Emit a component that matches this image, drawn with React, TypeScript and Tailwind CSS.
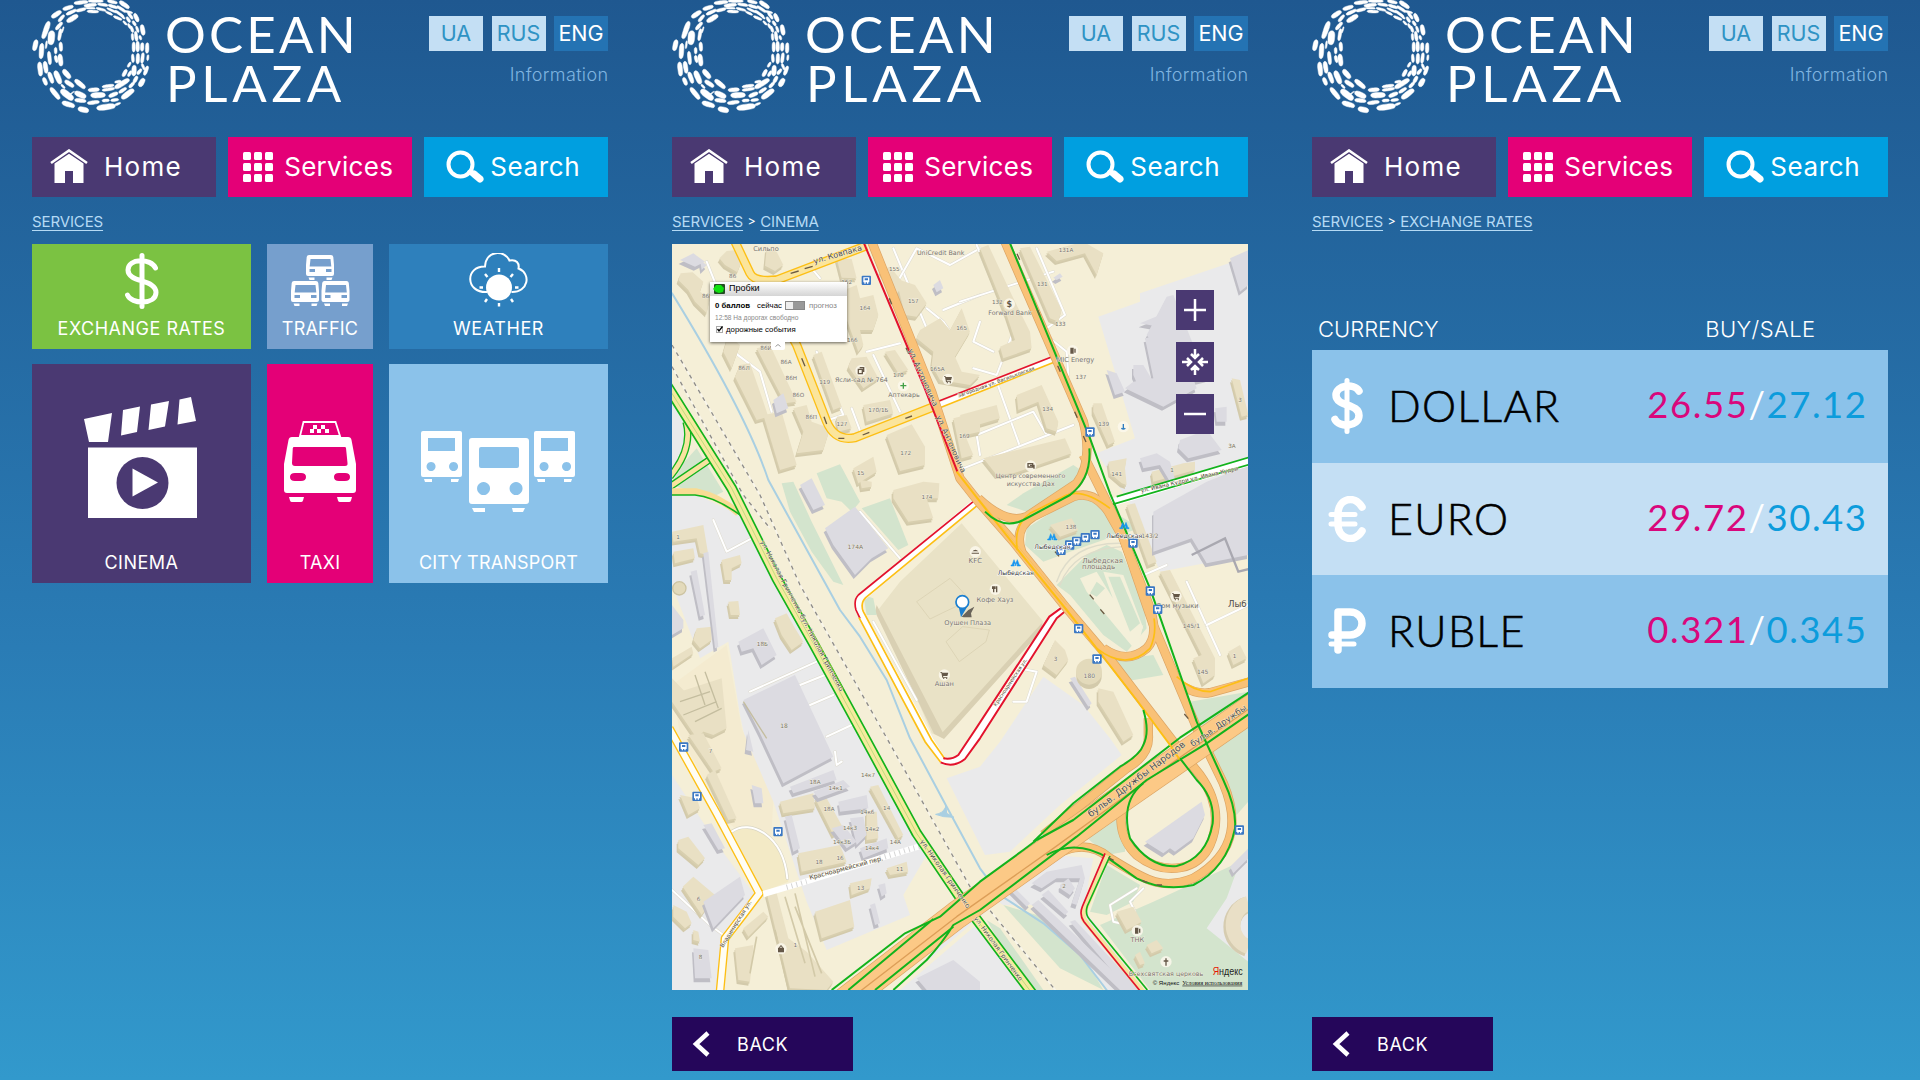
import React from "react";

/* ---------- Logo ---------- */

// Each fish of the ring: x1, y1, x2, y2, thickness
const fish: number[][] = [
  [166, 9, 200, 6, 10], [208, 3, 246, 3, 8], [266, 3, 288, 8, 9], [302, 6, 324, 22, 12], [196, 17, 226, 14, 10],
  [236, 12, 260, 16, 8], [268, 16, 290, 23, 8], [294, 20, 314, 34, 8], [98, 50, 120, 36, 13], [132, 27, 156, 20, 11],
  [142, 42, 166, 31, 9], [172, 32, 194, 27, 9], [205, 34, 232, 35, 8], [200, 24, 222, 25, 5], [232, 25, 254, 31, 7], [260, 36, 274, 43, 6],
  [264, 26, 286, 36, 6], [288, 34, 308, 48, 7], [284, 50, 302, 58, 7], [118, 62, 130, 48, 9], [144, 63, 170, 48, 14],
  [86, 68, 70, 112, 14], [110, 86, 124, 70, 10], [96, 96, 92, 130, 19], [122, 90, 117, 118, 9], [49, 123, 43, 148, 13],
  [66, 134, 63, 172, 13], [87, 158, 90, 190, 10], [107, 146, 107, 158, 8], [122, 130, 123, 150, 10], [107, 170, 110, 184, 9],
  [120, 166, 123, 194, 13], [59, 190, 62, 224, 13], [75, 188, 79, 216, 12], [72, 236, 78, 252, 11], [88, 220, 97, 246, 12],
  [107, 216, 120, 248, 15], [132, 212, 148, 232, 14], [138, 244, 158, 258, 12], [168, 242, 192, 262, 13],
  [94, 266, 116, 294, 13], [126, 272, 156, 296, 18], [126, 256, 132, 262, 6], [168, 278, 194, 290, 15], [208, 270, 234, 269, 11],
  [250, 260, 278, 256, 8], [250, 270, 280, 266, 8], [216, 286, 252, 285, 15], [130, 308, 160, 318, 14], [168, 300, 194, 303, 11],
  [206, 309, 234, 306, 10], [178, 326, 202, 332, 15], [234, 324, 282, 318, 16], [250, 302, 264, 301, 8], [276, 301, 292, 299, 8],
  [270, 288, 290, 280, 11], [288, 314, 298, 310, 6], [308, 293, 338, 271, 15], [300, 276, 316, 266, 9], [288, 262, 324, 240, 14],
  [300, 244, 288, 246, 7], [330, 260, 340, 250, 9], [360, 256, 370, 239, 14], [343, 245, 350, 232, 10], [310, 226, 318, 212, 10],
  [326, 226, 332, 216, 8], [341, 224, 343, 200, 13], [325, 198, 330, 190, 7], [354, 220, 362, 210, 9], [374, 222, 382, 202, 10],
  [367, 194, 372, 206, 7], [339, 184, 338, 166, 8], [353, 188, 354, 164, 10], [366, 186, 369, 162, 9], [383, 178, 384, 168, 6],
  [381, 156, 382, 132, 10], [341, 152, 341, 130, 9], [353, 152, 353, 128, 10], [366, 150, 367, 132, 10], [338, 118, 337, 104, 7],
  [350, 120, 347, 98, 9], [362, 116, 360, 110, 7], [370, 102, 366, 78, 12], [354, 94, 350, 82, 7], [338, 94, 334, 82, 8],
  [330, 82, 326, 74, 7], [345, 74, 340, 66, 8], [353, 62, 345, 44, 11], [328, 64, 322, 54, 8], [336, 54, 326, 40, 8],
  [318, 72, 312, 66, 6], [312, 54, 302, 44, 6], [126, 96, 130, 84, 4], [80, 126, 78, 142, 5], [148, 285, 160, 276, 3], [318, 34, 334, 38, 6],
];

// Rounded spindle along a fish's axis, a little thinner at the tail
function fishPath([x1, y1, x2, y2, w]: number[]) {
  const len = Math.hypot(x2 - x1, y2 - y1) || 1;
  const ux = (x2 - x1) / len;
  const uy = (y2 - y1) / len;
  const h = w * 0.52;
  const p = (t: number, s: number) => `${(x1 + ux * t - uy * s).toFixed(1)} ${(y1 + uy * t + ux * s).toFixed(1)}`;
  return `M${p(-4, 0)}C${p(-3, h)} ${p(len * 0.2, h * 1.1)} ${p(len * 0.55, h)}S${p(len + 4, h * 0.9)} ${p(len + 4, 0)}C${p(len + 4, -h * 0.9)} ${p(len * 0.85, -h)} ${p(len * 0.55, -h)}S${p(-3, -h)} ${p(-4, 0)}Z`;
}

function Logo() {
  return (
    <div className="flex h-[113px] w-[340px] shrink-0">
      <svg className="-ml-3 h-[120px] w-[140px] shrink-0" viewBox="0 0 420 360" fill="#fff" stroke="#fff" strokeWidth="1.5" strokeLinejoin="round">
        {fish.map((f, i) => (
          <path key={i} d={fishPath(f)} />
        ))}
      </svg>
      <div className="ml-[5px] pt-[10px] font-['Lato'] text-[51px] leading-[48.5px] text-white">
        <div className="tracking-[3.2px]">OCEAN</div>
        <div className="ml-[1px] tracking-[4.7px]">PLAZA</div>
      </div>
    </div>
  );
}

/* ---------- Header ---------- */

function Header() {
  return (
    <>
      <div className="flex h-[137px] justify-between">
        <Logo />
        <div className="pt-4">
          <div className="flex gap-[8.5px] text-[21.5px] font-[380]">
            <span className="flex h-[34.5px] w-[54px] items-center justify-center bg-[#c4dff4] text-[#2f93c4]">UA</span>
            <span className="flex h-[34.5px] w-[54px] items-center justify-center bg-[#c4dff4] text-[#2f93c4]">RUS</span>
            <span className="flex h-[34.5px] w-[54px] items-center justify-center bg-[#2473b3] text-white">ENG</span>
          </div>
          <div className="mt-[11.5px] -mr-[0.4px] text-right text-[18px] leading-[26px] font-light tracking-[0.35px] text-[#7fb4e0]">Information</div>
        </div>
      </div>
      <nav className="grid h-[59.5px] grid-cols-3 gap-[12.5px] text-[26px] font-[380] text-white">
        <a className="flex items-center bg-[#4a3972] pl-[18px]">
          <svg className="h-[35px] w-[38px]" viewBox="0 0 38 35" fill="#fff">
            <path d="M1 14 19 1.500 37 14" fill="none" stroke="#fff" strokeWidth="2.600" />
            <path d="M4.500 14.500 19 4.800l14.500 9.700V34H23V22h-8v12H4.500Z" />
          </svg>
          <span className="ml-[16px] tracking-[1.3px]">Home</span>
        </a>
        <a className="flex items-center bg-[#e40077] pl-[15px]">
          <svg className="h-[30px] w-[30px]" viewBox="0 0 30 30" fill="#fff">
            {[0, 11, 22].map((y) => [0, 11, 22].map((x) => <rect key={`${x}-${y}`} x={x} y={y} width="8" height="8" rx="1.500" />))}
          </svg>
          <span className="ml-[11px] tracking-[0.3px]">Services</span>
        </a>
        <a className="flex items-center bg-[#009fe0] pl-[22px]">
          <svg className="h-[33px] w-[38px]" viewBox="0 0 38 33" fill="none" stroke="#fff" strokeLinecap="round">
            <circle cx="14.500" cy="14.500" r="12" strokeWidth="4" />
            <path d="m23 22 3 2" strokeWidth="4" />
            <path d="m28 24 6 5" strokeWidth="7" />
          </svg>
          <span className="ml-[6px] tracking-[0.6px]">Search</span>
        </a>
      </nav>
    </>
  );
}

function Crumbs({ path }: { path: string[] }) {
  return (
    <div className="flex h-[47.5px] items-center gap-[4.5px] pt-[3px] text-[15px] tracking-[-0.12px] text-[#b5daf5]">
      {path.map((p, i) => (
        <React.Fragment key={p}>
          {i > 0 && <span className="text-[12.5px] text-white">&gt;</span>}
          <span className="underline underline-offset-[3px]">{p}</span>
        </React.Fragment>
      ))}
    </div>
  );
}

function Back() {
  return (
    <button className="flex h-[54px] w-[181px] items-center bg-[#25065a] pl-5 text-[18px] tracking-[0.6px] text-white">
      <svg className="h-[26px] w-[18px]" viewBox="0 0 18 26" fill="none" stroke="#fff" strokeWidth="4.500">
        <path d="M16 2 4 13l12 11" />
      </svg>
      <span className="ml-[27px]">BACK</span>
    </button>
  );
}

/* ---------- Tile icons ---------- */

function MiniBus({ x, y }: { x: number; y: number }) {
  return (
    <g transform={`translate(${x} ${y})`}>
      <path fillRule="evenodd" d="M2.500 0h22q2 0 2.300 2l.7 8v9q0 2-2 2h-24q-2 0-2-2v-9l.7-8q.3-2 2.300-2ZM4 4l-.8 7.500h21.600L24 4ZM3 14v3h5.500v-3Zm16.500 0v3H25v-3Z" />
      <path d="M2 22.500h6V25H3Zm18 0h6L25 25h-5Z" />
    </g>
  );
}

function TrafficIcon() {
  return (
    <svg className="h-[52px] w-[59px]" viewBox="0 0 59 52" fill="#fff">
      <MiniBus x={15.5} y={0} />
      <MiniBus x={0.5} y={26} />
      <MiniBus x={31} y={26} />
    </svg>
  );
}

function WeatherIcon() {
  return (
    <svg className="h-[54px] w-[60px]" viewBox="0 0 60 54" fill="none" stroke="#fff">
      <path d="M18 39C-4 40-4 13 16 13.500 17-3.500 36-3 40.500 7.500c7-1.500 10 3 9 8 13 5 10 24-7 23.500" strokeWidth="2" />
      <circle cx="30" cy="34.500" r="13" fill="#fff" stroke="none" />
      <path d="M30 15v4M16 21l2.500 3M44 21l-2.500 3M10.500 34.500h3.500M46 34.500h3.500M16 49l2-3M44 49l-2-3M30 50v3.500" strokeWidth="2.400" />
    </svg>
  );
}

function CinemaIcon() {
  return (
    <svg className="mr-[2px] h-[122px] w-[114px]" viewBox="0 0 114 122" fill="#fff">
      <path d="m0 22 28-6-4 29H5ZM39 13l17-3.500-3 25.500-16 3.500ZM67 7.500 85 4l-4 25.500-16.500 3.500ZM95.500 2.500 107 0l5 24-18.500 3.500Z" />
      <path d="M4 50.500h109V121H4Z" />
      <circle cx="58.500" cy="86" r="26" fill="#4a3972" />
      <path d="M48.500 71.500v28L74 85.500Z" />
    </svg>
  );
}

function TaxiIcon() {
  return (
    <svg className="h-[82px] w-[74px]" viewBox="0 0 74 82" fill="#fff">
      <path d="M20.500 1h32l4.500 14H17Z" fill="none" stroke="#fff" strokeWidth="1.800" />
      <path d="M30 4h4v4h-4Zm8 0h4v4h-4Zm-11 4h4v4h-4Zm7 0h4v4h-4Zm8 0h4v4h-4Z" />
      <path fillRule="evenodd" d="M9 16h56q3 0 3.500 3L73 43v26q0 3-3 3H4q-3 0-3-3V43l4.500-24q.5-3 3.500-3Zm2 10q-1 0-1.200 1L9 42q0 3 3 3h50q3 0 2.500-3L63 27q-.2-1-1.200-1ZM12 52q-5 0-5 4t5 4h6q5 0 5-4t-5-4Zm44 0q-5 0-5 4t5 4h6q5 0 5-4t-5-4Z" />
      <path d="M6 76h15l-1 3.500q-.5 1.500-2 1.500H9q-1.500 0-2-1.500Zm48 0h15l-1 3.500q-.5 1.500-2 1.500h-9q-1.500 0-2-1.500Z" />
    </svg>
  );
}

function TransportIcon() {
  const side = (x: number) => (
    <g transform={`translate(${x} 0)`}>
      <path fillRule="evenodd" d="M2 0h37q2 0 2 2v42q0 2-2 2H2q-2 0-2-2V2Q0 0 2 0Zm5 7v13h27V7ZM10 31a4.500 4.500 0 1 0 .1 0Zm22.500 0a4.500 4.500 0 1 0 .1 0Z" />
      <path d="M3 48h8v3H4ZM30 48h8l-1 3h-7Z" />
    </g>
  );
  return (
    <svg className="mr-[2px] h-[81px] w-[154px]" viewBox="0 0 154 81" fill="#fff">
      {side(0)}
      {side(113)}
      <path fillRule="evenodd" d="M51 7h54q3 0 3 3v60q0 3-3 3H51q-3 0-3-3V10q0-3 3-3Zm9 9q-2 0-2 2v17q0 2 2 2h36q2 0 2-2V18q0-2-2-2Zm2.500 35a6.500 6.500 0 1 0 .1 0ZM95 51a6.500 6.500 0 1 0 .1 0Z" />
      <path d="M51 77h13v4H53ZM91 77h13l-2 4H92Z" />
    </svg>
  );
}

function DollarIcon() {
  return (
    <svg className="h-[56px] w-[36px]" viewBox="0 0 36 56" fill="none" stroke="#fff" strokeLinecap="round">
      <path d="M18 2.500v51M31.500 15C27 5 4 5 4 17c0 13 28 9 28 22.500C32 52 7 51.500 3.500 42" strokeWidth="5" />
    </svg>
  );
}

/* ---------- Services screen ---------- */

function ServicesScreen() {
  return (
    <>
      <Crumbs path={["SERVICES"]} />
      <div className="grid grid-cols-[219px_105.500px_219px] grid-rows-[105px_219px] justify-between gap-y-[15px] text-[18px] leading-[22px] tracking-[0.2px] text-white">
        <div className="flex flex-col items-center justify-between bg-[#7bc242] pt-[9px] pb-[9px]">
          <DollarIcon />
          <span className="tracking-[0.5px]">EXCHANGE RATES</span>
        </div>
        <div className="flex flex-col items-center justify-between bg-[#769fcd] pt-[11px] pb-[9px]">
          <TrafficIcon />
          <span>TRAFFIC</span>
        </div>
        <div className="flex flex-col items-center justify-between bg-[#2e80bc] pt-[9px] pb-[9px]">
          <WeatherIcon />
          <span className="tracking-[0.6px]">WEATHER</span>
        </div>
        <div className="flex flex-col items-center justify-between bg-[#4a3972] pt-[33px] pb-[9.5px]">
          <CinemaIcon />
          <span className="tracking-[0.5px]">CINEMA</span>
        </div>
        <div className="flex flex-col items-center justify-between bg-[#e40077] pt-[57px] pb-[9.5px]">
          <TaxiIcon />
          <span>TAXI</span>
        </div>
        <div className="flex flex-col items-center justify-between bg-[#8bc2ea] pt-[67px] pb-[9.5px]">
          <TransportIcon />
          <span>CITY TRANSPORT</span>
        </div>
      </div>
    </>
  );
}

/* ---------- Map ---------- */

const beige: string[] = [
  "62,115 98,112 130,140 120,170 150,190 140,235 105,200 85,165 55,135", "200,48 225,46 245,78 232,112 195,90 178,70",
  "320,40 350,50 370,90 345,108 315,92", "205,300 240,330 215,400 190,350", "240,390 270,385 310,500 325,545 290,555 225,425",
  "290,340 330,330 410,500 375,505", "460,360 485,350 545,515 520,525", "530,70 575,72 590,130 545,128",
  "540,170 590,150 600,190 640,180 655,240 640,285 600,285 610,330 595,350 545,210", "660,105 690,95 735,150 705,180",
  "720,135 765,150 800,205 770,245 735,240 715,160", "780,285 840,250 870,285 905,220 930,290 885,365 905,410 960,420 930,450 840,435 815,390 820,350 770,310",
  "575,370 620,365 655,430 610,460 565,395", "675,350 705,345 745,405 715,415", "610,510 690,495 700,535 620,560",
  "530,545 560,540 575,580 535,590", "310,540 365,530 410,690 360,705", "400,520 440,510 455,560 510,580 490,645 410,655 430,590",
  "680,600 755,568 795,635 795,690 720,708", "580,700 640,665 650,710 595,745", "880,550 960,530 960,590 915,600 940,660 905,670",
  "960,40 985,30 1060,190 1110,290 1115,340 1030,370 1020,335 1065,315 1040,240", "1160,50 1270,20 1330,55 1310,120 1275,55 1190,78",
  "1080,40 1110,35 1205,225 1195,260 1170,250", "1070,480 1145,450 1195,560 1190,590 1160,580 1135,500 1075,525",
  "970,670 1215,610 1235,655 1060,715 1010,720", "900,540 1010,510 1020,550 920,580", "1300,505 1325,505 1365,620 1345,630 1300,530",
  "1345,680 1400,670 1395,700 1400,750 1385,745 1350,715", "1475,710 1570,685 1605,680 1605,705 1480,740", "1715,430 1740,435 1765,540 1745,545",
  "36,890 130,870 145,960 120,955 110,910 40,920", "40,950 100,940 105,970 45,985", "185,975 240,960 245,985 215,1000 215,1035 195,1035",
  "205,1100 235,1098 240,1140 212,1140", "345,1150 380,1135 405,1180 430,1220 395,1245 365,1200", "110,1180 155,1175 155,1215 120,1240 100,1215",
  "36,1270 95,1235 100,1255 40,1295", "60,1370 185,1330 200,1480 160,1500 100,1480", "36,1330 75,1370 80,1420 130,1490 110,1510 36,1400",
  "700,765 790,740 838,745 835,790 800,790 820,850 745,860 700,790", "600,735 635,740 635,755 605,760",
  "1170,870 1235,850 1255,885 1200,905", "1400,810 1425,805 1490,980 1465,990", "1500,1010 1530,1005 1665,1270 1665,1320 1630,1345 1600,1270 1625,1260",
  "1185,1215 1215,1245 1225,1275 1190,1320 1150,1290", "1315,1360 1360,1370 1420,1500 1390,1520 1315,1400", "1705,1250 1740,1230 1760,1270 1720,1290",
  "360,1700 460,1675 465,1720 370,1735", "465,1690 500,1690 550,1780 520,1800", "630,1655 655,1650 730,1800 715,1810", "415,1855 540,1830 560,1880 425,1910",
  "570,1945 635,1930 630,1960 575,1980", "465,2030 570,1995 583,2075 485,2110", "55,1815 85,1805 135,1870 115,1890 55,1840", "60,1680 110,1690 120,1720 85,1740",
  "40,2010 80,2030 95,2065 75,2080 40,2045", "68,1955 100,1925 165,1980 125,2040", "100,2085 115,2090 120,2120 100,2115",
  "320,1975 350,1975 385,2110 440,2150 520,2240 500,2265 390,2260", "225,2140 280,2130 270,2240 235,2235", "250,2080 310,2030 325,2045 265,2105",
  "620,1730 650,1730 655,1810 620,1815", "140,1620 165,1605 230,1750 205,1755", "85,1500 130,1495 185,1600 160,1610", "1370,2030 1420,2015 1445,2060 1400,2085",
  "1425,2160 1440,2150 1455,2185 1440,2190", "1460,2130 1490,2115 1510,2140 1475,2155", "680,1900 740,1880 745,1910 690,1920",
];

const grey: string[] = [
  "60,75 100,55 135,80 105,95", "120,75 140,90 125,105", "820,150 840,135 850,160 830,172", "340,495 370,475 385,520 350,535",
  "420,750 455,730 495,810 460,825", "495,880 585,815 685,940 635,970 585,1020 520,930", "1180,128 1200,115 1208,125 1190,135",
  "1340,405 1370,415 1395,470 1365,480", "1420,390 1450,390 1480,440 1435,455 1420,420",
  "1440,265 1500,240 1540,260 1610,460 1510,515 1395,460 1420,440 1480,430 1455,310 1500,300 1495,275", "1520,185 1540,180 1640,430 1560,450 1460,300",
  "1560,615 1640,585 1685,645 1585,670 1555,640", "1440,670 1490,655 1530,680 1550,750 1530,740 1500,690 1450,700",
  "1480,830 1640,740 1765,690 1765,960 1640,985 1595,910 1480,950", "1710,70 1765,45 1765,150 1740,170", "1775,480 1790,480 1800,520 1780,525",
  "1665,520 1700,515 1700,560 1670,560", "235,1220 310,1180 350,1260 305,1290 280,1240 245,1250", "250,1395 405,1320 520,1565 370,1645 300,1495",
  "92,1010 110,1005 135,1140 120,1145", "130,955 145,950 175,1235 165,1240", "36,1110 70,1155 70,1180 36,1200",
  "390,1655 520,1605 530,1635 400,1675", "460,1670 550,1635 570,1655 475,1690", "375,1745 395,1740 420,1840 400,1850", "535,1700 620,1680 625,1720 540,1730",
  "515,1780 550,1770 590,1820 560,1840", "600,1840 680,1810 685,1840 610,1870", "570,1750 610,1745 620,1800 590,1830", "275,1650 305,1660 310,1705 285,1705",
  "265,1485 280,1550 258,1545", "130,1770 155,1765 195,1840 175,1845", "130,2000 240,1925 255,1980 160,2080", "100,2140 145,2145 155,2230 105,2230",
  "630,2010 645,2005 660,2065 645,2070", "655,1950 675,1945 680,1975 665,1985", "770,2230 880,2175 960,2240 960,2265 800,2265",
  "1455,1820 1625,1700 1635,1740 1600,1810 1545,1850 1530,1840 1510,1855", "1115,1945 1160,1910 1265,1890 1275,1930 1250,2010 1235,2005 1260,1930 1190,1930 1145,1960",
  "1145,1980 1165,1965 1225,2030 1215,2040", "1050,1965 1065,1960 1110,2005 1100,2015", "1200,1950 1225,1930 1245,1960 1230,1980 1200,1960",
  "1115,2010 1135,1995 1350,2200 1420,2265 1380,2265", "1230,2060 1245,2055 1440,2265 1405,2265", "1710,1895 1765,1840 1765,1870 1720,1915",
  "1230,1330 1245,1325 1295,1405 1285,1415",
];

const parks: string[] = [
  "470,715 540,688 600,800 575,830 545,800 500,790", "365,745 400,740 455,860 530,1010 550,1050 520,1040 455,950 390,830",
  "605,820 690,790 745,930 715,945", "36,740 70,690 110,730 190,770 80,765 36,750", "65,690 110,640 190,770 150,790",
  "1090,775 1240,690 1270,710 1250,750 1100,830 1040,810", "1100,880 1240,790 1320,800 1360,830 1440,880 1345,910 1230,950 1150,980 1095,930",
  "1190,1050 1280,960 1340,930 1385,950 1450,1100 1460,1180 1400,1250 1330,1200 1230,1080", "1355,1275 1480,1260 1510,1320 1390,1340",
  "1590,1400 1765,1370 1765,1700 1730,1740", "1260,1790 1400,1720 1395,1850 1340,1860", "1290,2030 1340,1890 1440,1950 1420,2000 1340,2040",
  "1480,2000 1740,1880 1700,1990 1640,2080 1765,2180 1765,2265 1470,2265 1320,2070", "1030,2010 1130,2040 1280,2180 1330,2265 1200,2200",
  "980,2055 1020,2080 1150,2265 1100,2265", "610,1080 640,1090 650,1140 620,1140",
];

const lanes: string[] = [
  "140,80 180,180 210,170 240,230", "220,350 300,410 335,530", "470,350 550,540 490,560", "575,520 605,600", "620,350 720,325", "640,360 720,530",
  "455,100 480,130", "700,40 800,280 860,310", "690,180 770,40 870,90 960,40", "850,225 960,180", "800,220 850,260 870,290",
  "900,200 1070,145 1180,110", "950,30 1060,290 1010,420 940,400", "1000,350 940,320 960,260", "1130,40 1215,240 1160,280",
  "1170,310 1220,350 1225,420", "1010,440 1080,635", "960,660 950,600 1120,530 1160,600", "910,700 1240,570",
  "160,855 200,950 275,910", "270,1370 470,1280", "420,1350 495,1320", "450,1410 520,1380", "500,1505 575,1470", "525,1550 530,1590 545,1580",
  "600,830 720,970", "640,1160 770,1395", "1060,1400 1100,1400 1130,1310 1075,1300", "1580,1040 1680,1260", "1640,1170 1765,1110", "1440,1025 1520,990",
  "36,1965 150,2070 190,2100", "1430,1960 1350,2010 1360,2060 1380,2065", "1450,1960 1410,2000 1425,2030",
];

const rails: string[] = ["36,330 300,780 420,1050 675,1500 930,1955 960,1990 1190,2270", "36,395 250,780 330,880"];

type Tag = [string, number, number, number?, number?];

// text, x, y, font size, rotation
const tags: Tag[] = [
  ["Сильпо", 318, 48, 20], ["86", 218, 130, 17], ["86Г", 142, 188, 17], ["UniCredit Bank", 842, 60, 19], ["155", 703, 108, 17], ["157", 760, 204, 17],
  ["162", 560, 148, 17], ["164", 615, 224, 17], ["166", 577, 320, 17], ["165", 905, 284, 17], ["165А", 832, 407, 17], ["170", 715, 427, 17],
  ["Ясли-сад № 764", 604, 440, 19], ["Аптекарь", 732, 487, 19], ["170/1Б", 655, 532, 17], ["119", 494, 448, 17], ["127", 546, 572, 17],
  ["86И", 318, 345, 17], ["86А", 378, 388, 17], ["86Н", 394, 434, 17], ["86О", 415, 485, 17], ["86П", 454, 552, 17], ["86Л", 252, 404, 17],
  ["172", 737, 661, 17], ["15", 602, 720, 17], ["169", 913, 609, 17], ["131А", 1218, 50, 17], ["131", 1147, 153, 17], ["132", 1012, 208, 17],
  ["Forward Bank", 1050, 241, 19], ["133", 1201, 273, 17], ["137", 1263, 432, 17], ["134", 1163, 527, 17],
  ["139", 1331, 573, 17], ["3", 1740, 501, 17], ["3А", 1716, 638, 17], ["1", 1536, 712, 17], ["141", 1370, 722, 17],
  ["Центр современного", 1112, 728, 19], ["искусства Дах", 1112, 753, 19], ["174", 801, 791, 17], ["174А", 586, 943, 18], ["1", 54, 912, 17],
  ["18Б", 307, 1232, 17], ["18", 372, 1480, 18], ["138", 1233, 882, 17], ["KFC", 946, 984, 21], ["Кофе Хауз", 1005, 1100, 20],
  ["Оушен Плаза", 923, 1169, 20], ["Ашан", 853, 1354, 20], ["143/2", 1470, 908, 18], ["145/1", 1594, 1178, 18],
  ["145", 1628, 1317, 18], ["1", 1724, 1270, 17], ["3", 1187, 1277, 17], ["180", 1288, 1329, 18], ["7", 152, 1553, 17], ["18А", 465, 1647, 17],
  ["14к1", 527, 1665, 17], ["14к7", 624, 1626, 17], ["18А", 507, 1728, 17], ["14к6", 622, 1736, 17], ["14", 680, 1724, 17], ["14к3", 570, 1786, 17],
  ["14к2", 637, 1788, 17], ["14к3Б", 546, 1827, 17], ["14А", 706, 1827, 17], ["14к4", 636, 1846, 17], ["16", 540, 1874, 17], ["18", 477, 1887, 17],
  ["11", 719, 1908, 17], ["13", 602, 1964, 17], ["6", 116, 1999, 17], ["8", 122, 2173, 17], ["1", 406, 2136, 17], ["2", 1212, 1960, 17],
  ["ТНК", 1432, 2122, 20], ["Всехсвятская церковь", 1518, 2222, 19], ["Лыбедская", 1328, 983, 21], ["площадь", 1316, 1002, 21],
  ["MIC Energy", 1246, 382, 20], ["Дом музыки", 1552, 1118, 20],
];

const streets: Tag[] = [
  ["ул. Ковпака", 535, 66, 24, -16], ["ул. Антоновича", 782, 430, 23, 66], ["ул. Антоновича", 866, 630, 23, 66],
  ["Загородная ул. Васильковская", 1010, 446, 15, -20], ["ул. Ивана Кудри ул. Ивана Кудри", 1590, 739, 17, -13],
  ["ул. Николая Гринченко бул. Николая Гринченко", 420, 1145, 20, 62], ["Красноармейский пер.", 560, 1905, 19, -15],
  ["Владимирская ул.", 232, 2070, 17, -58], ["Красноармейская ул.", 1055, 1345, 15, -56], ["ул. Николая Гринченко", 850, 1920, 20, 55],
  ["ул. Николая Гринченко", 1010, 2145, 19, 54], ["бульв. Дружбы Народов", 1435, 1640, 28, -37], ["бульв. Дружбы", 1680, 1479, 25, -35], ["Лыб", 1732, 1117, 26],
];

const stops: number[][] = [
  [619, 136], [1290, 591], [1203, 946], [1229, 930], [1250, 919], [1276, 908], [1305, 899], [1419, 924], [1471, 1068], [1493, 1123],
  [1256, 1181], [1311, 1272], [71, 1536], [111, 1684], [354, 1790], [1738, 1785],
];

function Metro({ x, y }: { x: number; y: number }) {
  return (
    <g>
      <path d={`M${x - 14} ${y + 9}h10l-1-4 2-6 3 10 3-10 2 6-1 4h10v-3h-3l-6-16-5 12-5-12-6 16h-3Z`} fill="#1595f0" stroke="#1595f0" strokeWidth="1.500" />
      <text x={x} y={y + 36} textAnchor="middle" fontSize="18.500" fill="#333" stroke="#fff" strokeWidth="3" paintOrder="stroke">Лыбедская</text>
    </g>
  );
}

const G = "#12b31c";
const R = "#e3122d";
const Y = "#fdbf14";
const O = "#f9c177";

// An edge-lined road: casing colour under a narrower fill
function Road({ d, w, edge, fill, e = 4 }: { d: string; w: number; edge: string; fill: string; e?: number }) {
  return (
    <>
      <path d={d} stroke={edge} strokeWidth={w} />
      <path d={d} stroke={fill} strokeWidth={w - e * 2} />
    </>
  );
}

const avenues: string[] = [
  "M635 20 815 470 900 730 955 800 1060 920 1220 1120 1360 1285 1440 1390 1540 1520 1620 1620C1670 1690 1680 1760 1650 1830 1620 1900 1520 1930 1430 1860 1375 1810 1360 1710 1430 1660",
  "M1035 20 1270 560Q1300 680 1250 745L1100 845Q1040 870 955 790",
  "M1085 950Q1060 880 1120 845L1240 785Q1300 765 1345 830L1390 910 1465 1105Q1500 1200 1460 1240 1400 1290 1330 1240",
  "M1270 660 1380 880 1480 1170 1615 1490 1690 1645C1730 1740 1740 1850 1600 1930 1500 1970 1450 1930 1350 1870 1280 1810 1220 1835 1100 1900",
  "M1560 1350Q1610 1380 1650 1373L1770 1340M1465 1450V1500Q1470 1560 1400 1600L1150 1800",
];

function CityMap() {
  return (
    <svg className="block h-[746px] w-[576px]" viewBox="36 27 1728 2238" preserveAspectRatio="none" fontFamily="'DejaVu Sans', 'Noto Sans', sans-serif">
      <rect x="36" y="27" width="1728" height="2238" fill="#f5efd7" />
      <g fill="#eaeaeb">
        <path d="M36 500 85 590 70 650 36 720ZM36 780H110L240 840 560 1440 800 1860 730 1980 750 2040 500 2145 440 2000 340 1700 290 1680 240 1440 205 1220 120 1270 36 1050Z" />
        <path d="M1315 245 1440 200 1440 175 1765 65V960L1500 1010 1420 820 1310 655 1425 610Z" />
        <path d="M36 1620 180 1840 300 2000 190 2110 170 2265H36Z" />
        <path d="M960 1595 1020 1520 1150 1325 1270 1410 1350 1510 1385 1560 1200 1710 1050 1850 975 1860 860 1630Z" />
        <path d="M800 2180 1180 1860 1300 1870 1270 2020 1450 2265H1340L1120 2010 1030 2010 960 1970ZM960 2060 1090 2265H720Z" />
        <path d="M1765 1870 1640 2000 1620 2110 1765 2200ZM1650 1460 1765 1400V1500Z" />
      </g>
      <path d="M36 1350 200 1230 245 1480 340 1700 330 1860 200 1760 60 1500Z" fill="#f4ebd0" />
      <path d="M720 1040 905 865 1150 1160 1145 1185 850 1510 815 1495 740 1320 650 1130Z" fill="#e9e2c6" />
      <path d="M650 1110 848 1492 1145 1165 1149 1182 852 1512 822 1496 740 1328 645 1130Z" fill="#d9d0b3" />
      <path d="m770 1100 100-70 60 65-75 35-45 22Zm88 120 50-45 80 10-10 35-80 60Z" fill="none" stroke="#d6cdae" strokeWidth="2" />
      <g fill="#d3e4cd">{parks.map((p) => <polygon key={p} points={p} />)}</g>
      <path d="M215 1790C270 1750 370 1800 385 1940L310 1970Z" fill="#f3eac6" />
      <path d="M1260 1030 1310 1010 1450 1240 1430 1250 1280 1070ZM1330 1010 1390 1020 1450 1180 1400 1205ZM1405 1200 1450 1170 1430 1250Z" fill="#f4f0da" />
      <path d="M1290 1075 1310 1040 1335 1060 1310 1085ZM1345 1025 1380 1025 1440 1165 1410 1190Z" fill="#d3e4cd" />

      <g fill="none" strokeLinejoin="round" strokeLinecap="round">
        <path d="M36 175C150 360 270 570 325 735L540 1125 600 1205 680 1335 750 1510 860 1715 960 1900 1020 1980 1150 2065 1260 2160 1340 2265" stroke="#a9cfe2" strokeWidth="6" />
        <path d="M828 1738q20-3 28-20l2-5 2 22 22 12-30-2Z" fill="#a9cfe2" stroke="#a9cfe2" strokeWidth="3" />
        {lanes.map((l) => (
          <g key={l}>
            <polyline points={l} stroke="#dedbcf" strokeWidth="9" />
            <polyline points={l} stroke="#fff" strokeWidth="6" />
          </g>
        ))}
        <g strokeLinecap="butt">
          {rails.map((l) => (
            <g key={l}>
              <polyline points={l} stroke="#f8f5ea" strokeWidth="5" />
              <polyline points={l} stroke="#8e8c88" strokeWidth="4" strokeDasharray="12 14" />
            </g>
          ))}
        </g>
        <path d="M215 1790C270 1750 370 1800 382 1930" stroke="#d8d4c2" strokeWidth="10" />
        <path d="M215 1790C270 1750 370 1800 382 1930" stroke="#fff" strokeWidth="6" />
        <path d="M1190 1040Q1230 920 1390 925M1200 1050Q1240 940 1390 935" stroke="#dedcca" strokeWidth="4" />
      </g>

      <g fill="#d3caab">{beige.map((p) => <polygon key={p} points={p} transform="translate(-5 12)" />)}</g>
      <g fill="#d8cfaf">{beige.map((p) => <polygon key={p} points={p} transform="translate(-2 6)" />)}</g>
      <g fill="#e9e0c4">{beige.map((p) => <polygon key={p} points={p} />)}</g>
      <g fill="#bfbec5">{grey.map((p) => <polygon key={p} points={p} transform="translate(-4 12)" />)}</g>
      <g fill="#dcdbe1">{grey.map((p) => <polygon key={p} points={p} />)}</g>
      <path d="M1249 1310v14a38 38 0 0 0 76 0v-14Z" fill="#d3caab" />
      <g fill="#e3dabb">
        <circle cx="1287" cy="1310" r="39" />
        <circle cx="58" cy="1060" r="20" stroke="#cdc4a2" strokeWidth="4" />
      </g>
      <path d="M1765 2010A65 68 0 0 0 1765 2140" transform="translate(-4 0)" fill="none" stroke="#d6ccb0" strokeWidth="50" />
      <path d="M1765 2005A65 68 0 0 0 1765 2135" fill="none" stroke="#e9dfc6" strokeWidth="44" />
      <path d="m250 1400 70 110M60 1400l90-30m-80 70 100-40m-65 60 80-40m-50-110 40 110m-70-100 30 90" stroke="#c4bd9f" strokeWidth="4" fill="none" />
      <path d="m375 1985 60 200m-30-210 60 250m-120-140 40 180m20-250 80 200m-195-110-20 110" stroke="#d2c9a8" strokeWidth="5" fill="none" />
      <path d="m1595 960 100-50 40 100 40-10" stroke="#a9a8b0" strokeWidth="7" fill="none" />

      <g fill="none" strokeLinejoin="round">
        {/* Local streets */}
        <Road d="M225 20 270 115Q283 142 350 135L620 32" w={28} edge={Y} fill="#fbe59c" />
        <Road d="M330 185 410 330 500 560Q525 620 585 608L822 515" w={28} edge={Y} fill="#fbe59c" />
        <path d="M815 520 1180 375" stroke="#fff" strokeWidth="16" />
        <path d="M812 508 1180 364" stroke={R} strokeWidth="5" />
        <path d="M825 524 1182 382" stroke={Y} strokeWidth="5" />
        <path d="M1340 807 1770 680" stroke="#fff" strokeWidth="24" />
        <path d="M1370 785 1770 666M1345 812 1770 688" stroke={G} strokeWidth="5" />
        <Road d="M28 1480 170 1735 298 1975Q250 2040 195 2110L180 2270" w={26} edge={Y} fill="#fffdf4" />
        <path d="M310 1977 430 1942 660 1870 785 1832" stroke="#fff" strokeWidth="18" />
        <path d="M380 1957 440 1940M660 1870 785 1832" stroke="#d5d5d5" strokeWidth="16" strokeDasharray="3 12" />

        {/* Embankment road */}
        <Road d="M30 755 155 670M78 560Q100 640 30 725" w={22} edge={G} fill="#f8e3a0" />
        <path d="M30 770H110Q180 785 235 835" stroke="#f8dc94" strokeWidth="20" />
        <path d="M30 780H105Q165 785 243 842" stroke={G} strokeWidth="5" />
        <Road d="M20 450 215 760 350 1030 460 1225 610 1500 770 1795 895 1980 1120 2280" w={32} edge={G} fill="#f5ea9e" e={5} />
        <path d="M20 450 215 760 350 1030 460 1225 610 1500 770 1795 895 1980 1120 2280" stroke={G} strokeWidth="2" opacity=".35" />

        {/* Around the plaza */}
        <path d="M955 795 605 1088Q590 1105 605 1140L812 1520 845 1572Q870 1592 905 1565L960 1490 1175 1150 1222 1110" stroke="#fff" strokeWidth="22" />
        <path d="M958 785 595 1080Q580 1095 588 1125L600 1150" stroke={R} strokeWidth="5" />
        <path d="M962 803 617 1088Q600 1105 610 1130L815 1515 855 1572M597 1148 795 1520 842 1582" stroke={Y} strokeWidth="5" />
        <path d="M842 1582Q880 1600 915 1572L960 1510 1190 1150 1230 1117M850 1570Q875 1575 895 1560L945 1485 1168 1145 1218 1108" stroke={R} strokeWidth="6" />

        {/* Main avenues */}
        <g stroke="#dba464" strokeWidth="28">{avenues.map((d) => <path key={d} d={d} />)}</g>
        <g stroke={O} strokeWidth="24">{avenues.map((d) => <path key={d} d={d} />)}</g>
        <path d="M540 2310 890 2040 1180 1835 1400 1680 1790 1410" stroke="#dba464" strokeWidth="84" />
        <path d="M540 2310 890 2040 1180 1835 1400 1680 1790 1410" stroke="#fcc986" strokeWidth="80" />
        <path d="M560 2300 890 2045 1180 1840 1400 1680 1790 1405" stroke="#dc9e58" strokeWidth="4" />
        <path d="m515 2265 220-170 105-50L960 1940l130-95 40-30 110-60L1560 1508 1770 1370M565 2265 820 2052M645 2265 880 2075M700 2265 800 2175Q850 2120 880 2070L960 2025 1250 1805 1460 1635 1640 1525 1770 1435" stroke={G} strokeWidth="6" />

        {/* Traffic edges */}
        <path d="M610 20 790 450 892 710" stroke={R} strokeWidth="6" />
        <path d="M1220 1110 955 790" stroke={Y} strokeWidth="2" opacity=".5" />
        <path d="M890 710 960 800 1090 965 1220 1125 1310 1240 1430 1395 1530 1530 1560 1575" stroke={Y} strokeWidth="6" />
        <path d="M1310 1240Q1400 1310 1470 1240 1490 1200 1482 1150M1072 945Q1060 870 1110 835L1220 780Q1270 760 1350 820M1550 1325Q1600 1370 1650 1370L1770 1328" stroke={Y} strokeWidth="5" />
        <path d="M1048 20 1290 610 1350 775 1470 1060 1610 1460 1635 1515 1690 1635Q1730 1720 1725 1780 1700 1900 1600 1950 1510 1970 1430 1930L1345 1870Q1250 1810 1160 1860M1288 640Q1295 730 1230 780L1090 855Q1030 885 975 830" stroke={G} strokeWidth="6" />
        <path d="M1450 1425Q1470 1490 1450 1530 1440 1560 1380 1595L1240 1705 1120 1820M1560 1570 1610 1635Q1665 1690 1658 1765 1640 1870 1550 1893 1470 1900 1410 1810 1380 1700 1450 1645" stroke={G} strokeWidth="6" />
        <path d="m1343 1862-70 165q-10 20 5 35l170 208" stroke="#f7e39e" strokeWidth="16" />
        <path d="m1335 1855-68 160q-10 25 5 45l170 210" stroke={R} strokeWidth="5" />
        <path d="m1350 1863-68 150q-8 25 8 42l172 210" stroke={G} strokeWidth="5" />
        <path d="m392 115 24-7m18-7 24-7M425 370l10 24M492 545l8 22M535 610h18M608 600l20-8m108-42 20-7M688 190l7 18m43 130 8 18m325-300 8 18m53 150 8 18m53 150 8 18m43 120 8 18m18 55 8 18M1185 950l12 14m92 115 12 14m20 30 12 14m240 300 12 14M1345 1868l16 8m85 60 16 6m28 8h16" stroke="#6b5a42" strokeWidth="4" />
      </g>

      {/* Text */}
      <g textAnchor="middle" fill="#77736c" stroke="#f6f2e2" strokeWidth="2" paintOrder="stroke">
        {tags.map(([t, x, y, s], i) => <text key={i} x={x} y={y} fontSize={s}>{t}</text>)}
      </g>
      <g textAnchor="middle" fill="#4d4b47" stroke="#fbf4df" strokeWidth="2" paintOrder="stroke">
        {streets.map(([t, x, y, s, r], i) => (
          <text key={i} x={x} y={y} fontSize={s} transform={`rotate(${r ?? 0} ${x} ${y})`}>{t}</text>
        ))}
      </g>

      {/* Places */}
      {stops.map(([x, y]) => (
        <g key={`${x}-${y}`}>
          <rect x={x - 14} y={y - 14} width="28" height="28" rx="3" fill="#3b78c4" />
          <path fillRule="evenodd" fill="#fff" d={`M${x - 9} ${y - 9}h18v15h-3v4h-4v-4h-4v4h-4v-4h-3ZM${x - 5} ${y - 6}v6h10v-6Z`} />
        </g>
      ))}
      <g>
        {[[1048, 207], [730, 452], [603, 407], [864, 433], [1238, 347], [1390, 575], [1112, 693], [946, 950], [1006, 1063], [853, 1320], [1548, 1084], [363, 2141], [1432, 2087], [1518, 2180]].map(([x, y]) => (
          <circle key={`${x}-${y}`} cx={x} cy={y} r="17" fill="#fbf8ec" opacity=".85" />
        ))}
        <g fill="none" stroke="#655848" strokeWidth="4">
          <path d="M730 443v18m-9-9h18" stroke="#43a047" />
          <path d="M595 403h12v13h-12Zm4-5h12v13M1104 686h14v10h-14Zm6 5h12v10M1518 2170v22m-7-14h14M1001 1054v18m9-18v18m-12-18v6h7v-6" />
          <path d="M1390 567v16m-6-3q6 5 12 0" stroke="#2f7dc0" />
        </g>
        {[[864, 433], [853, 1320], [1548, 1084]].map(([x, y]) => (
          <g key={`${x}-${y}`} fill="#655848">
            <path d={`M${x - 12} ${y - 9}h5l1 2h18l-3 10H${x - 4}l1 3h12v2H${x - 6}l-3-15h-3Z`} />
            <circle cx={x - 2} cy={y + 10} r="2" />
            <circle cx={x + 7} cy={y + 10} r="2" />
          </g>
        ))}
        <path fill="#655848" d="M937 949q9-10 18 0Zm-2 4h22v3h-22ZM1231 338h10v18h-10Zm12 3h4v12h-4ZM1425 2078h10v18h-10Zm12 3h4v12h-4ZM354 2138h18v14h-18ZM357 2138q6-14 12 0h-3q-3-7-6 0Z" />
        <text x="1048" y="216" textAnchor="middle" fontSize="24" fontWeight="700" fill="#655848">$</text>
      </g>
      <Metro x={1177} y={906} />
      <Metro x={1067} y={984} />
      <Metro x={1393} y={872} />

      {/* Pin */}
      <path d="m905 1145 20-20 18-10-10 20 2 12h-24Z" fill="#3d3a35" opacity=".75" />
      <path d="M903 1147 897 1120A20 20 0 1 1 920 1118Z" fill="#1b7fd0" />
      <circle cx="907" cy="1101" r="19" fill="#fff" stroke="#1b7fd0" strokeWidth="5" />

      <text x="1748" y="2221" textAnchor="end" fontFamily="'Liberation Sans', sans-serif" fontSize="31" fill="#222" textLength="90" lengthAdjust="spacingAndGlyphs">
        <tspan fill="#e61400">Я</tspan>ндекс
      </text>
      <g fontFamily="'Liberation Sans', sans-serif" fontSize="18" fill="#111">
        <text x="1478" y="2249" textLength="80">© Яндекс</text>
        <text x="1567" y="2249" textLength="180" lengthAdjust="spacingAndGlyphs" fontFamily="'Liberation Serif', serif" textDecoration="underline">Условия использования</text>
      </g>
    </svg>
  );
}

function MapScreen() {
  return (
    <>
      <Crumbs path={["SERVICES", "CINEMA"]} />
      <div className="relative">
        <CityMap />
        <div className="absolute top-[38px] left-[38px] w-[137px] bg-white font-['Liberation_Sans'] shadow-[0_1px_3px_rgba(0,0,0,0.6)]">
          <div className="flex h-[14px] items-center gap-1 bg-linear-to-b from-white to-[#d5d5d5] pl-[3px] text-[9px] text-black">
            <svg className="h-[10px] w-[12px]" viewBox="0 0 12 10">
              <rect x="1" width="11" height="10" rx="1" fill="#234d23" />
              <path d="m0 5 3-4h5l3 3-1 4-4 1-3-1Z" fill="#10e010" />
            </svg>
            Пробки
          </div>
          <div className="flex h-[19px] items-center pl-[5px] text-[7.800px]">
            <b>0 баллов</b>
            <span className="ml-[7px]">сейчас</span>
            <span className="ml-[3px] flex h-[9px] w-[20px] border border-[#888] bg-[#999]">
              <span className="w-[7px] bg-[#eee]" />
            </span>
            <span className="ml-[4px] text-[#888]">прогноз</span>
          </div>
          <div className="h-[11px] pl-[5px] text-[6.600px] leading-[6px] text-[#888]">12:58 На дорогах свободно</div>
          <div className="flex h-[16px] items-start gap-[3px] pl-[6px] text-[7.800px] leading-[8px]">
            <svg className="h-[7px] w-[7px]" viewBox="0 0 7 7">
              <rect x=".5" y=".5" width="6" height="6" fill="#fff" stroke="#aaa" />
              <path d="m1.500 3 1.500 2L6.500.500" fill="none" stroke="#000" strokeWidth="1.300" />
            </svg>
            дорожные события
          </div>
          <div className="absolute top-[59px] left-[61px] flex h-[9px] w-[14px] items-center justify-center rounded-b-[2px] bg-white">
            <svg className="h-[3px] w-[6px]" viewBox="0 0 6 3" fill="none" stroke="#999">
              <path d="m.5 2.500 2.500-2 2.500 2" />
            </svg>
          </div>
        </div>
        <div className="absolute top-[46px] right-[34px] flex flex-col gap-3">
          {["M8 20h22M19 9v22", "M19 7v9m-4-4 4 4 4-4M19 33v-9m-4 4 4-4 4 4M6 20h9m-4-4 4 4-4 4M32 20h-9m4-4-4 4 4 4", "M8 20h22"].map((d) => (
            <span key={d} className="flex h-10 w-[38px] bg-[#4a3972]">
              <svg className="h-10 w-[38px]" viewBox="0 0 38 40" fill="none" stroke="#fff" strokeWidth="2.500">
                <path d={d} />
              </svg>
            </span>
          ))}
        </div>
      </div>
      <div className="mt-[27px]">
        <Back />
      </div>
    </>
  );
}

/* ---------- Exchange rates screen ---------- */

const rates = [
  { name: "DOLLAR", buy: "26.55", sale: "27.12", box: "0 0 32 56", size: "h-[56px] w-[32px] ml-[19px] mr-[25px]", icon: "M16 2.500v51", bold: "M28 13C23 5 5 7 5 17c0 12 23 8 23 20.500C28 49 8 50 4 41.500" },
  { name: "EURO", buy: "29.72", sale: "30.43", box: "0 0 38 46", size: "h-[46px] w-[38px] ml-4 mr-[22px]", icon: "M3 18.500h24M3 28h24", bold: "M34 11C26-2 10 3 10 18v10c0 15 16 20 24 7" },
  { name: "RUBLE", buy: "0.321", sale: "0.345", box: "0 0 38 46", size: "h-[46px] w-[38px] ml-4 mr-[22px]", icon: "M3 36h23", bold: "M10 42V4h12c16 0 16 23 0 23H4" },
];

function RatesScreen() {
  return (
    <>
      <Crumbs path={["SERVICES", "EXCHANGE RATES"]} />
      <div className="flex h-[106px] items-end justify-between pr-[72.5px] pb-[8px] pl-[6px] text-[22px] leading-[26px] font-light text-white">
        <span>CURRENCY</span>
        <span className="tracking-[0.4px]">BUY/SALE</span>
      </div>
      {rates.map((r) => (
        <div key={r.name} className="flex h-[112.500px] items-center pr-[20.5px] font-['Lato'] even:bg-[#c4dff4] odd:bg-[#8bc2ea]">
          <svg className={r.size} viewBox={r.box} fill="none" stroke="#fff" strokeLinecap="round" strokeLinejoin="round">
            <path d={r.icon} strokeWidth="5" />
            <path d={r.bold} strokeWidth="7.500" />
          </svg>
          <span className="text-[43px] font-light tracking-[1.3px] text-black [-webkit-text-stroke:0.6px_black]">{r.name}</span>
          <span className="ml-auto pb-[3px] text-[36.5px] tracking-[1.55px] text-[#d9077c]">
            {r.buy}
            <span className="text-white">/</span>
            <span className="text-[#0c9cdc]">{r.sale}</span>
          </span>
        </div>
      ))}
      <div className="mt-auto pb-[9px]">
        <Back />
      </div>
    </>
  );
}

export default function App() {
  return (
    <div className="grid h-[1080px] w-[1920px] grid-cols-3 overflow-hidden bg-linear-to-b from-[#1f5890] via-[#2a7cb5] via-60% to-[#3299cc] font-['Inter']">
      {[ServicesScreen, MapScreen, RatesScreen].map((Screen, i) => (
        <main key={i} className="flex h-[1080px] flex-col px-8">
          <Header />
          <Screen />
        </main>
      ))}
    </div>
  );
}
